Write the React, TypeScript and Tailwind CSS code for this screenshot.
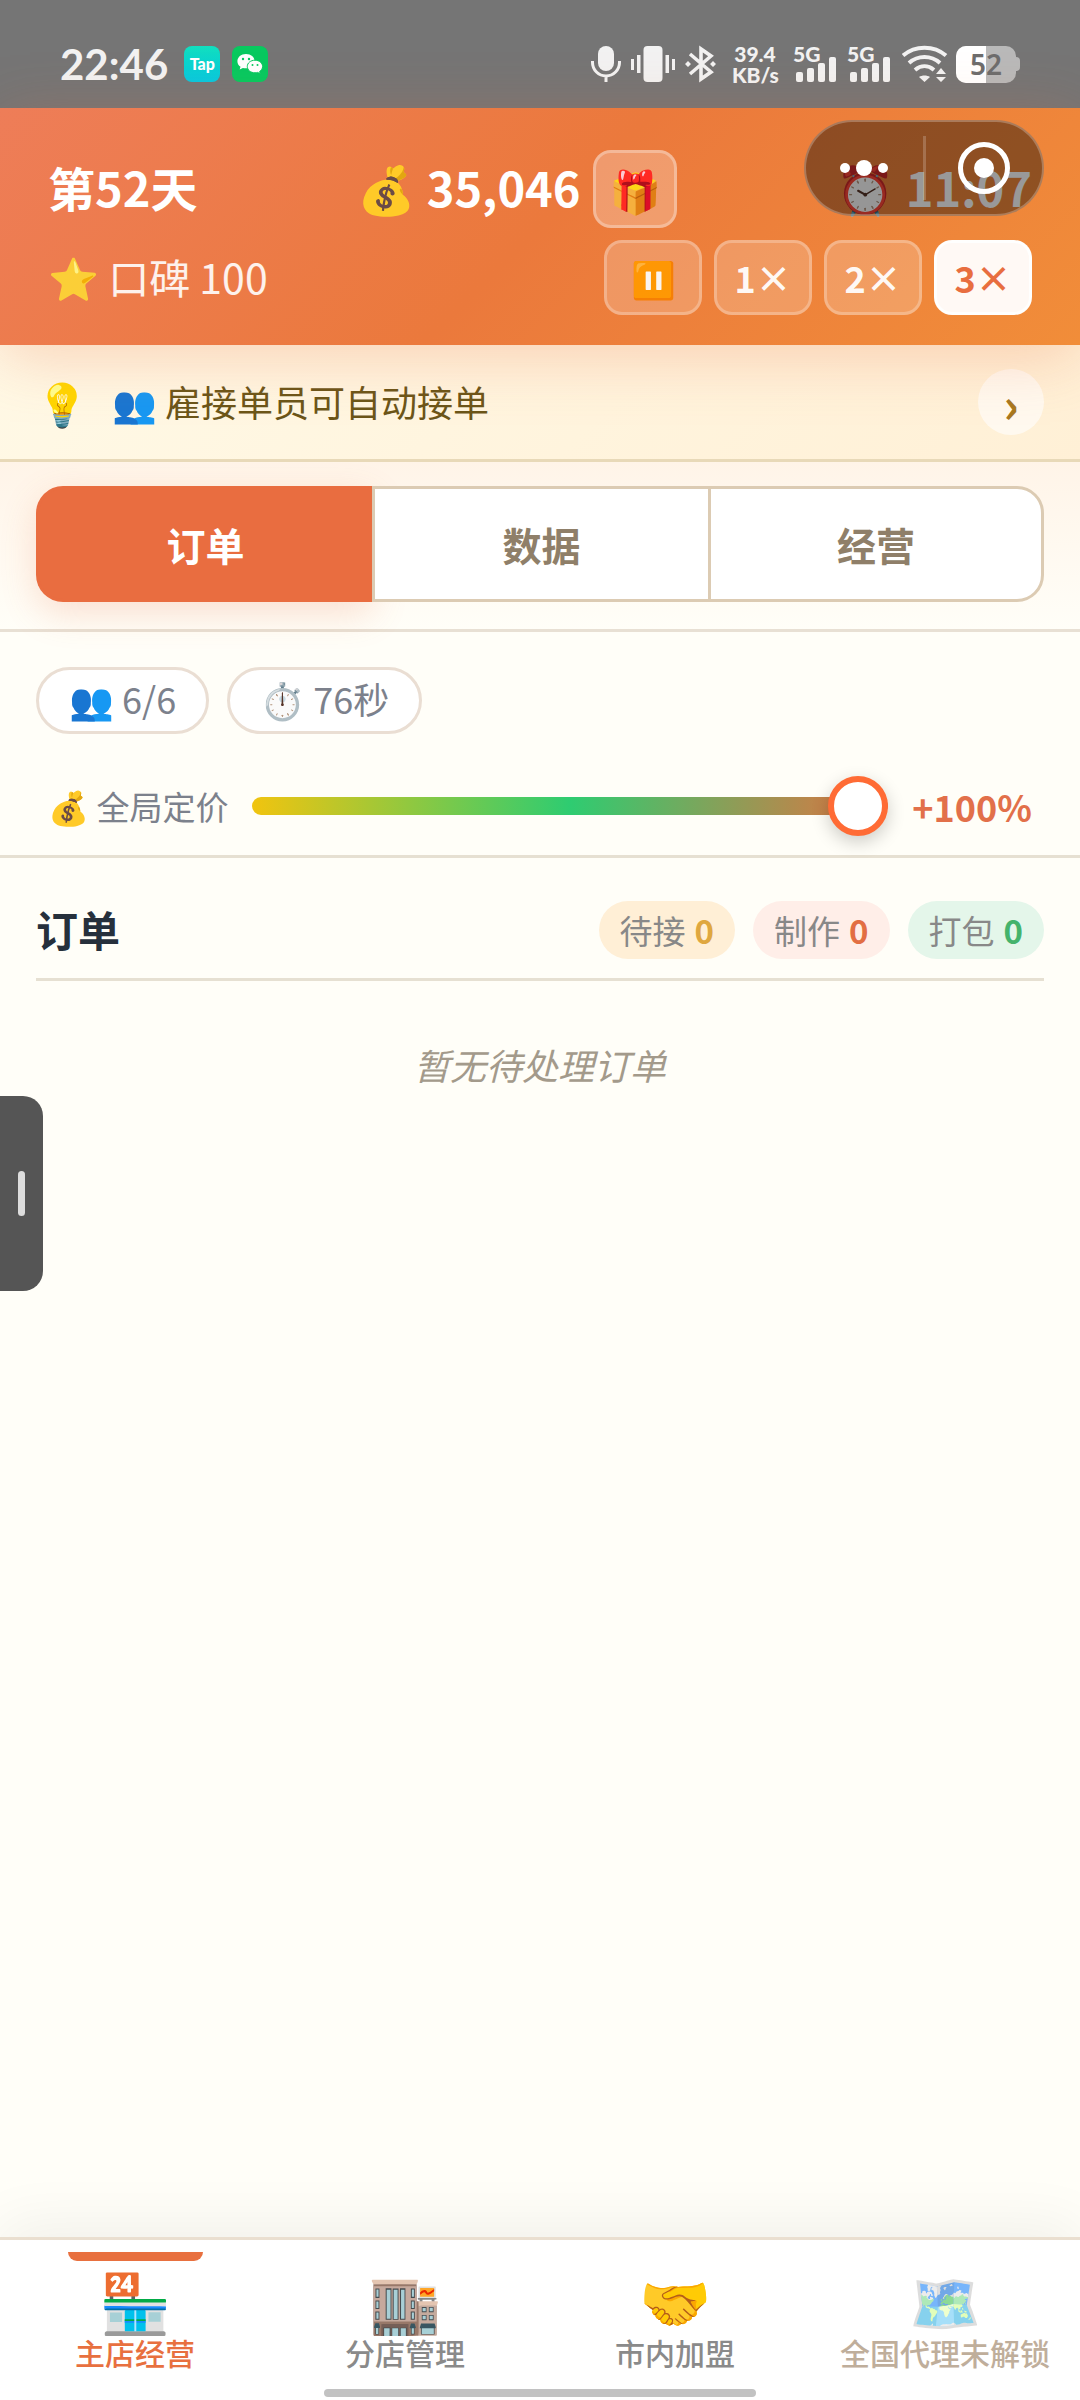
import React, { useState } from 'react';

const StatusBar: React.FC = () => (
  <div className="flex h-[108px] items-center justify-between bg-[#757575] px-[60px] pt-5 text-[#f2f2f2]">
    <div className="flex items-center">
      <span className="mr-4 font-['Lato',sans-serif] text-[42px] font-bold leading-[44px]">22:46</span>
      <span className="mr-3 flex h-9 w-9 items-center justify-center rounded-lg bg-gradient-to-b from-[#12dfbe] to-[#08c8e0] font-['Lato',sans-serif] text-[16px] font-black leading-4 text-white">
        Tap
      </span>
      <svg className="h-9 w-9" viewBox="0 0 36 36">
        <rect width="36" height="36" rx="8" fill="#07c95f" />
        <path d="M14 8c-5 0-8.6 3.200-8.600 7.200 0 2.300 1.200 4.200 3.100 5.600l-.8 2.700 3.200-1.600c1 .3 2 .4 3.100.4 4.900 0 8.600-3 8.600-7.100S18.900 8 14 8z" fill="#fff" />
        <path d="M23 14.200c-4.400 0-7.700 2.800-7.700 6.300s3.300 6.300 7.700 6.300c.9 0 1.800-.1 2.600-.4l2.700 1.400-.7-2.300c1.800-1.200 3-2.900 3-5 0-3.500-3.300-6.300-7.600-6.300z" fill="#fff" stroke="#07c95f" strokeWidth="1" />
        <g fill="#07c95f">
          <circle cx="11" cy="13" r="1.200" />
          <circle cx="17" cy="13" r="1.200" />
          <circle cx="20.500" cy="19" r="1" />
          <circle cx="25.500" cy="19" r="1" />
        </g>
      </svg>
    </div>

    <div className="flex items-center">
      <svg className="h-[38px] w-[30px]" viewBox="0 0 30 38">
        <rect x="7" y="1" width="16" height="25" rx="8" fill="currentColor" />
        <path d="M1.500 16v1.500a13.500 13.500 0 0 0 27 0V16M15 31v6" fill="none" stroke="currentColor" strokeWidth="3" />
      </svg>
      <svg className="ml-2.5 h-[38px] w-11" viewBox="0 0 44 38" fill="currentColor">
        <rect x="12.500" y="1" width="19" height="36" rx="4" />
        <rect x="0" y="14" width="3" height="11" />
        <rect x="6" y="10" width="3.500" height="18" />
        <rect x="34.500" y="10" width="3.500" height="18" />
        <rect x="41" y="14" width="3" height="11" />
      </svg>
      <svg className="ml-2.5 h-[38px] w-[31px]" viewBox="0 0 31 38">
        <path d="M5 9l21 18-10 7V4l10 7L5 29" fill="none" stroke="currentColor" strokeWidth="3.600" />
        <path d="M3 16l3 3-3 3-3-3zM28 16l3 3-3 3-3-3z" fill="currentColor" />
      </svg>
      <span className="ml-4 w-[46px] text-center font-['Lato',sans-serif] text-[21px] font-black leading-[21px]">
        39.4
        <br />
        KB/s
      </span>
      <div className="ml-4 flex gap-3">
        <Signal />
        <Signal />
      </div>
      <svg className="ml-3 h-[38px] w-[46px]" viewBox="0 0 46 38">
        <g fill="none" stroke="currentColor" strokeWidth="4">
          <path d="M1 10.500C13 0 32 0 44 10.500" />
          <path d="M7 18C16 10 29 10 38 18" />
          <path d="M13 25c6-5 13-5 19 0" />
        </g>
        <path d="M17 32c3-2 8-2 11 0l-5.500 5zM39 23l5 6H34zM39 37l5-5H34z" fill="currentColor" />
      </svg>
      <div className="relative ml-2 flex h-[37px] w-[60px] items-center justify-center overflow-hidden rounded-[10px] bg-[#b9b9b9]">
        <div className="absolute inset-y-0 left-0 w-1/2 bg-white" />
        <span className="relative font-['Noto_Sans',sans-serif] text-[28px] font-semibold leading-8 text-[#6d6d6d]">52</span>
      </div>
      <div className="h-3.5 w-1 rounded-r bg-[#b9b9b9]" />
    </div>
  </div>
);

const Signal: React.FC = () => (
  <span className="relative block h-[38px] w-[42px]">
    <span className="absolute -left-px -top-0.5 font-['Lato',sans-serif] text-[21px] font-black leading-[21px]">5G</span>
    <svg className="h-full w-full" viewBox="0 0 42 38" fill="currentColor">
      <rect x="2" y="27" width="7" height="10" rx="2" />
      <rect x="13" y="23" width="7" height="14" rx="2" />
      <rect x="24" y="18" width="7" height="19" rx="2" />
      <rect x="35" y="12" width="7" height="25" rx="2" />
    </svg>
  </span>
);

const speeds = ['⏸️', '1×', '2×', '3×'];

const Header: React.FC = () => {
  const [speed, setSpeed] = useState('3×');
  return (
    <header className="relative z-10 flex flex-col gap-3 bg-linear-[135deg,#ee7d58,#eb793c_50%,#f18d39] px-12 pb-[30px] pt-[42px] text-white shadow-[0_12px_60px_rgba(232,110,64,0.28)]">
      <div className="flex items-center justify-between text-[47px] font-bold leading-[60px]">
        <span className="pb-1">第52天</span>
        <div className="flex items-center gap-3">
          <span className="pb-1">💰 35,046</span>
          <button aria-label="礼物" className="h-[78px] w-[84px] rounded-[18px] border-[3px] border-white/30 bg-white/25 text-[42px] leading-[60px]">
            🎁
          </button>
        </div>
        <span className="pb-1">⏰ 11:07</span>
      </div>
      <div className="flex items-center justify-between">
        <span className="pb-1 text-[41px] leading-[60px] text-white/90">⭐ 口碑 100</span>
        <div className="flex gap-3">
          {speeds.map((s) => (
            <button
              key={s}
              onClick={() => setSpeed(s)}
              className={`h-[75px] w-[98px] rounded-[18px] border-[3px] pb-0.5 text-[36px] font-bold leading-[54px] ${
                s === speed ? 'border-white/90 bg-white/95 text-[#e86e3f]' : 'border-white/25 bg-white/20 text-white/95'
              }`}
            >
              {s}
            </button>
          ))}
        </div>
      </div>

      {/* Mini-program capsule floats over the clock */}
      <div className="absolute right-9 top-3 flex h-24 w-60 items-center rounded-full border-2 border-white/25 bg-black/40">
        <button aria-label="更多" className="flex flex-1 items-center justify-center gap-1.5">
          <i className="h-2.5 w-2.5 rounded-full bg-white" />
          <i className="h-4 w-4 rounded-full bg-white" />
          <i className="h-2.5 w-2.5 rounded-full bg-white" />
        </button>
        <div className="h-16 w-[3px] bg-white/20" />
        <button aria-label="关闭" className="flex flex-1 items-center justify-center">
          <span className="flex h-[52px] w-[52px] items-center justify-center rounded-full border-[5px] border-white">
            <i className="h-5 w-5 rounded-full bg-white" />
          </span>
        </button>
      </div>
    </header>
  );
};

const tabs = ['订单', '数据', '经营'];

const counters = [
  { label: '待接', box: 'bg-[#ffefd6]', num: 'text-[#dfa73f]' },
  { label: '制作', box: 'bg-[#ffeee8]', num: 'text-[#e26e43]' },
  { label: '打包', box: 'bg-[#e4f6ea]', num: 'text-[#45b36c]' },
];

const navItems = [
  { icon: '🏪', label: '主店经营', color: 'text-[#e8703f]' },
  { icon: '🏬', label: '分店管理', color: 'text-[#8a8a8a]' },
  { icon: '🤝', label: '市内加盟', color: 'text-[#8a8a8a]' },
  { icon: '🗺️', label: '全国代理未解锁', color: 'text-[#bfae9b]', locked: true },
];

export default function App() {
  const [tab, setTab] = useState('订单');
  const [price, setPrice] = useState(100);

  return (
    <div className="relative flex min-h-screen flex-col bg-[#fffef8] font-['Noto_Sans_CJK_SC',sans-serif]">
      <StatusBar />
      <Header />

      <div className="flex items-center border-b-[3px] border-[#e8d9b8] bg-linear-[135deg,#fff9e6,#fff0d6] px-9 py-6">
        <span className="mr-6 text-[42px] leading-[60px]">💡</span>
        <p className="flex-1 pb-0.5 text-[36px] leading-[54px] text-[#6b5518]">👥 雇接单员可自动接单</p>
        <button aria-label="下一条" className="h-[66px] w-[66px] rounded-full bg-white/60 text-[48px] font-bold leading-[60px] text-[#a87820]">
          ›
        </button>
      </div>

      <div className="border-b-[3px] border-[#e8e0d4] bg-gradient-to-b from-[#fff4e8] to-[#fffef8] px-9 pb-[27px] pt-6">
        <div className="grid grid-cols-3">
          {tabs.map((t) => (
            <button
              key={t}
              onClick={() => setTab(t)}
              className={`border-y-[3px] border-l-[3px] py-[25px] text-[39px] font-bold leading-[60px] first:rounded-l-[27px] last:rounded-r-[27px] last:border-r-[3px] ${
                t === tab
                  ? 'border-[#e96d40] bg-[#e96d40] text-white shadow-[0_12px_36px_rgba(232,110,64,0.2)]'
                  : 'border-[#dccbb3] bg-white text-[#8f7f69]'
              }`}
            >
              {t}
            </button>
          ))}
        </div>
      </div>

      <div className="border-b-[3px] border-[#e6e0d2] px-9 pb-[19px] pt-[35px] text-[#7c818c]">
        <div className="flex gap-[18px] text-[36px] leading-[49px]">
          <span className="rounded-full border-[3px] border-[#eaded3] bg-white px-[30px] pb-2 pt-1">👥 6/6</span>
          <span className="rounded-full border-[3px] border-[#eaded3] bg-white px-[30px] pb-2 pt-1">⏱️ 76秒</span>
        </div>
        <div className="mt-[42px] flex items-center gap-6 px-3">
          <label htmlFor="price" className="text-[33px] leading-[60px]">
            💰 全局定价
          </label>
          <input
            id="price"
            type="range"
            min={-50}
            max={100}
            value={price}
            onChange={(e) => setPrice(Number(e.target.value))}
            className="h-[18px] min-w-0 flex-1 appearance-none rounded-full bg-linear-[90deg,#f1c40f,#2ecc71,#e8703f] [&::-webkit-slider-thumb]:h-[60px] [&::-webkit-slider-thumb]:w-[60px] [&::-webkit-slider-thumb]:appearance-none [&::-webkit-slider-thumb]:rounded-full [&::-webkit-slider-thumb]:border-[6px] [&::-webkit-slider-thumb]:border-[#ff6b35] [&::-webkit-slider-thumb]:bg-white [&::-webkit-slider-thumb]:shadow-[0_6px_18px_rgba(0,0,0,0.2)]"
          />
          <span className="text-[36px] font-bold leading-[54px] text-[#e2704a]">
            {price > 0 ? '+' : ''}
            {price}%
          </span>
        </div>
      </div>

      <main className="flex-1 px-9 pt-[42px]">
        <div className="flex items-center justify-between border-b-[3px] border-[#e6e0d2] pb-[18px]">
          <h2 className="pb-0.5 text-[42px] font-bold leading-[58px] text-[#26303c]">订单</h2>
          <div className="flex gap-[18px] text-[33px] leading-[48px] text-[#888]">
            {counters.map((c) => (
              <span key={c.label} className={`flex gap-[9px] rounded-full px-[21px] py-[5px] ${c.box}`}>
                {c.label}
                <b className={c.num}>0</b>
              </span>
            ))}
          </div>
        </div>
        <p className="pt-14 text-center text-[36px] italic leading-[54px] text-[#a39a8b]">暂无待处理订单</p>
      </main>

      <nav className="flex border-t-[3px] border-[#eadfd0] bg-white pb-[30px] pt-3 shadow-[0_-12px_60px_rgba(0,0,0,0.06)]">
        {navItems.map((n, i) => (
          <button key={n.label} className={`relative flex flex-1 basis-0 flex-col items-center pt-3.5 ${n.color}`}>
            {i === 0 && <span className="absolute left-1/4 top-0 h-[9px] w-1/2 rounded-b-[9px] bg-[#e8703f]" />}
            <span className={`mb-0.5 text-[58px] leading-[66px] ${n.locked ? 'opacity-60' : ''}`}>{n.icon}</span>
            <span className="whitespace-nowrap text-[30px] font-medium leading-9">{n.label}</span>
          </button>
        ))}
      </nav>

      {/* System overlays: side drawer handle and home bar */}
      <div className="absolute left-0 top-[1096px] flex h-[195px] w-[43px] items-center justify-center rounded-r-[20px] bg-[#555]">
        <div className="h-[45px] w-[7px] rounded-full bg-[#ddd]" />
      </div>
      <div className="absolute bottom-[3px] left-[30%] h-2 w-2/5 rounded-full bg-[#c2c2c2]" />
    </div>
  );
}
